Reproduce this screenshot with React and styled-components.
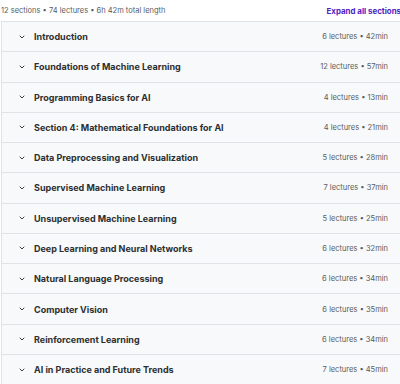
import React from "react";
import styled, { createGlobalStyle } from "styled-components";

const Global = createGlobalStyle`
  body {
    margin: 0;
    background: #fff;
    font-family: Inter, "Noto Sans", sans-serif;
    overflow: hidden;
  }
`;

const sections = [
  ["Introduction", 6, 42],
  ["Foundations of Machine Learning", 12, 57],
  ["Programming Basics for AI", 4, 13],
  ["Section 4: Mathematical Foundations for AI", 4, 21],
  ["Data Preprocessing and Visualization", 5, 28],
  ["Supervised Machine Learning", 7, 37],
  ["Unsupervised Machine Learning", 5, 25],
  ["Deep Learning and Neural Networks", 6, 32],
  ["Natural Language Processing", 6, 34],
  ["Computer Vision", 6, 35],
  ["Reinforcement Learning", 6, 34],
  ["AI in Practice and Future Trends", 7, 45],
];

const Wrap = styled.div`
  width: 404px;
  padding-left: 1px;
`;

const Header = styled.div`
  height: 21px;
  display: flex;
  align-items: center;
  justify-content: space-between;
  padding-right: 4px;
`;

const Summary = styled.span`
  font-size: 7.5px;
  color: #595c5f;
`;

const ExpandAll = styled.button`
  all: unset;
  cursor: pointer;
  font-size: 7.9px;
  font-weight: 700;
  color: #5022c3;
`;

const Panel = styled.div`
  border-left: 1px solid #dfe3e6;
  border-top: 1px solid #dfe3e6;
`;

const Row = styled.div`
  height: 29.27px;
  border-bottom: 1px solid #dfe3e6;
  background: #f7f9fa;
  display: flex;
  align-items: center;
  padding: 0 17px 0 16px;
`;

const Chevron = styled.svg`
  width: 8px;
  height: 8px;
  margin-right: 8px;
  flex: none;
`;

const Title = styled.span`
  flex: 1;
  font-size: 9px;
  font-weight: 700;
  color: #2d2f31;
`;

const Meta = styled.span`
  font-size: 7.5px;
  color: #595c5f;
`;

export default function App() {
  return (
    <Wrap>
      <Global />
      <Header>
        <Summary>12 sections • 74 lectures • 6h 42m total length</Summary>
        <ExpandAll>Expand all sections</ExpandAll>
      </Header>
      <Panel>
        {sections.map(([name, lectures, min]) => (
          <Row key={name}>
            <Chevron viewBox="0 0 24 24">
              <path d="M6 9l6 6 6-6" fill="none" stroke="#2d2f31" strokeWidth="2.8" strokeLinecap="round" strokeLinejoin="round" />
            </Chevron>
            <Title>{name}</Title>
            <Meta>{lectures} lectures • {min}min</Meta>
          </Row>
        ))}
      </Panel>
    </Wrap>
  );
}
